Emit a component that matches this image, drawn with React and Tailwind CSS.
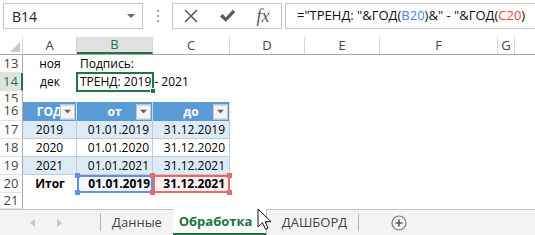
import React from 'react';

const W = { rh: 'w-[23px]', A: 'w-[54px]', B: 'w-[76px]', C: 'w-[77px]', D: 'w-[75px]', E: 'w-[75px]', F: 'w-[118px]', G: 'w-[17px]' };

const FilterBtn = () => (
  <div className="absolute right-[1px] top-1/2 -translate-y-1/2 flex h-[15px] w-[15px] items-center justify-center border border-[#c8c8c8] bg-[#f4f4f4]">
    <svg width="7" height="4" viewBox="0 0 7 4">
      <path d="M0 0h7L3.5 4z" fill="#5f5f5f" />
    </svg>
  </div>
);

const Handle = ({ pos, color }) => (
  <div className={`absolute h-[5px] w-[5px] ${pos} ${color}`} />
);

const RowHead = ({ n, h, active }) => (
  <div
    className={`${W.rh} ${h} shrink-0 flex items-center justify-center overflow-hidden text-[13px] ${
      active ? 'bg-[#e1e1e1] text-[#217346] border-r-2 border-r-[#217346]' : 'bg-white text-[#444] border-r border-r-[#ababab]'
    } border-b border-b-[#e1e1e1]`}
  >
    {n}
  </div>
);

export default function App() {
  const cols = [
    ['A', W.A],
    ['B', W.B],
    ['C', W.C],
    ['D', W.D],
    ['E', W.E],
    ['F', W.F],
    ['G', W.G],
  ];

  const tableRows = [
    { n: 17, y: '2019', from: '01.01.2019', to: '31.12.2019', bg: 'bg-[#ddebf7]' },
    { n: 18, y: '2020', from: '01.01.2020', to: '31.12.2020', bg: 'bg-white' },
    { n: 19, y: '2021', from: '01.01.2021', to: '31.12.2021', bg: 'bg-[#ddebf7]' },
  ];

  return (
    <div className="relative h-[235px] w-[535px] overflow-hidden bg-white font-['Open_Sans',sans-serif] text-[12px] text-black">
      {/* formula bar */}
      <div className="flex h-[37px] items-start pt-[3px]">
        <div className="ml-[3px] flex h-[26px] w-[140px] shrink-0 items-center justify-between border border-[#c6c6c6] pl-[8px] pr-[7px] text-[14px] text-[#222]">
          <span>B14</span>
          <svg width="8" height="4" viewBox="0 0 8 4">
            <path d="M0 0h8L4 4z" fill="#6a6a6a" />
          </svg>
        </div>
        <div className="flex h-[26px] w-[29px] shrink-0 flex-col items-center justify-center gap-[3px]">
          <div className="h-[2px] w-[2px] bg-[#a0a0a0]" />
          <div className="h-[2px] w-[2px] bg-[#a0a0a0]" />
          <div className="h-[2px] w-[2px] bg-[#a0a0a0]" />
        </div>
        <div className="flex h-[26px] w-[110px] shrink-0 items-center border border-[#c6c6c6]">
          <div className="flex w-[36px] justify-center">
            <svg width="16" height="16" viewBox="0 0 16 16">
              <path d="M2 2l12 12M14 2L2 14" stroke="#5a5a5a" strokeWidth="1.6" />
            </svg>
          </div>
          <div className="flex w-[36px] justify-center">
            <svg width="17" height="14" viewBox="0 0 17 14">
              <path d="M1 7.5l2.6-2.4 3.2 3.3L13.8 0.8 16.2 3.2 6.8 12.8z" fill="#5a5a5a" />
            </svg>
          </div>
          <div className="flex w-[36px] justify-center font-['Liberation_Serif',serif] text-[18px] italic leading-none text-[#5a5a5a]">
            fx
          </div>
        </div>
        <div className="ml-[3px] flex h-[26px] flex-1 items-center whitespace-nowrap border-y border-l border-[#c6c6c6] pl-[11px] text-[13px] text-[#111]">
          ="ТРЕНД: "&amp;ГОД(<span className="text-[#4f82d8]">B20</span>)&amp;" - "&amp;ГОД(<span className="text-[#e0474c]">C20</span>)
        </div>
      </div>

      {/* column headers */}
      <div className="flex h-[18px] border-b border-[#ababab]">
        <div className={`${W.rh} relative shrink-0 border-r border-[#d4d4d4]`}>
          <svg className="absolute bottom-[2px] right-[2px]" width="10" height="10" viewBox="0 0 10 10">
            <path d="M10 0v10H0z" fill="#c9c9c9" />
          </svg>
        </div>
        {cols.map(([c, w]) => (
          <div
            key={c}
            className={`${w} shrink-0 flex items-center justify-center text-[13px] border-r border-[#d4d4d4] ${
              c === 'B' ? 'bg-[#e1e1e1] text-[#217346] border-b-2 border-b-[#217346]' : 'text-[#444]'
            }`}
          >
            {c}
          </div>
        ))}
        <div className="flex-1" />
      </div>

      {/* row 13 */}
      <div className="flex h-[18px]">
        <RowHead n={13} h="h-[18px]" />
        <div className={`${W.A} shrink-0 flex items-center justify-center`}>ноя</div>
        <div className={`${W.B} shrink-0 flex items-center pl-[3px] whitespace-nowrap`}>Подпись:</div>
      </div>

      {/* row 14 */}
      <div className="flex h-[18px]">
        <RowHead n={14} h="h-[18px]" active />
        <div className={`${W.A} shrink-0 flex items-center justify-center`}>дек</div>
        <div className={`${W.B} relative shrink-0 flex items-center pl-[3px] whitespace-nowrap`}>
          <span>ТРЕНД: 2019 - 2021</span>
          <div className="absolute -left-[1px] -right-[1px] -top-[1px] -bottom-[1px] border-2 border-[#217346]" />
          <div className="absolute -bottom-[3px] -right-[3px] h-[6px] w-[6px] border border-white bg-[#217346]" />
        </div>
      </div>

      {/* row 15 (mostly hidden) */}
      <div className="flex h-[11px] overflow-hidden">
        <div className={`${W.rh} h-[11px] shrink-0 overflow-hidden border-r border-[#ababab] text-center text-[13px] leading-[15px] text-[#444]`}>
          15
        </div>
      </div>

      {/* row 16: table header */}
      <div className="flex h-[19px]">
        <RowHead n={16} h="h-[19px]" />
        {[
          ['ГОД', W.A],
          ['от', W.B],
          ['до', W.C],
        ].map(([t, w]) => (
          <div
            key={t}
            className={`${w} relative shrink-0 flex items-center justify-center overflow-hidden bg-[#5b9bd5] font-bold text-white border-r border-[#c9d9ee]`}
          >
            {t}
            <FilterBtn />
          </div>
        ))}
      </div>

      {/* rows 17-19 */}
      {tableRows.map((r) => (
        <div key={r.n} className="flex h-[18px]">
          <RowHead n={r.n} h="h-[18px]" />
          <div className={`${W.A} ${r.bg} shrink-0 flex items-center justify-center border-r border-b border-[#c9c9c9]`}>{r.y}</div>
          <div className={`${W.B} ${r.bg} shrink-0 flex items-center justify-end pr-[3px] border-r border-b border-[#c9c9c9]`}>{r.from}</div>
          <div className={`${W.C} ${r.bg} shrink-0 flex items-center justify-end pr-[4px] border-r border-b border-[#c9c9c9]`}>{r.to}</div>
        </div>
      ))}

      {/* row 20: total */}
      <div className="flex h-[18px]">
        <RowHead n={20} h="h-[18px]" />
        <div className={`${W.A} shrink-0 flex items-center justify-center font-bold`}>Итог</div>
        <div className={`${W.B} relative shrink-0 flex items-center justify-end bg-[#f1f5fd] pr-[3px] font-bold`}>
          01.01.2019
          <div className="absolute inset-0 border-2 border-[#6590e0]" />
          <Handle pos="-left-[2px] -top-[2px]" color="bg-[#6590e0]" />
          <Handle pos="-left-[2px] -bottom-[2px]" color="bg-[#6590e0]" />
        </div>
        <div className={`${W.C} relative shrink-0 flex items-center justify-end bg-[#fdf0f0] pr-[5px] font-bold`}>
          31.12.2021
          <div className="absolute inset-0 border-2 border-[#e66a6d]" />
          <Handle pos="-left-[3px] -top-[2px]" color="bg-[#e66a6d]" />
          <Handle pos="-left-[3px] -bottom-[2px]" color="bg-[#e66a6d]" />
          <Handle pos="-right-[2px] -top-[2px]" color="bg-[#e66a6d]" />
          <Handle pos="-right-[2px] -bottom-[2px]" color="bg-[#e66a6d]" />
        </div>
      </div>

      {/* row 21 */}
      <div className="flex h-[16px]">
        <RowHead n={21} h="h-[16px]" />
      </div>

      {/* sheet tabs */}
      <div className="flex h-[26px] bg-[#f3f3f3] text-[13px] text-[#444]">
        <div className="flex w-[173px] shrink-0 items-stretch border-t border-[#c6c6c6]">
          <div className="flex w-[100px] items-center justify-center gap-[22px] pr-[8px]">
            <svg width="5" height="8" viewBox="0 0 5 8">
              <path d="M5 0v8L0 4z" fill="#c6c6c6" />
            </svg>
            <svg width="5" height="8" viewBox="0 0 5 8">
              <path d="M0 0v8l5-4z" fill="#c6c6c6" />
            </svg>
          </div>
          <div className="my-[4px] w-px bg-[#b5b5b5]" />
          <div className="flex flex-1 items-center justify-center">Данные</div>
        </div>
        <div className="flex w-[93px] shrink-0 items-center justify-center border-b-2 border-b-[#217346] bg-white pr-[8px] pt-[1px] font-bold text-[#217346]">
          Обработка
        </div>
        <div className="flex flex-1 items-stretch border-t border-l border-[#b5b5b5] border-t-[#c6c6c6]">
          <div className="flex w-[91px] items-center justify-center pl-[4px]">ДАШБОРД</div>
          <div className="my-[4px] w-px bg-[#b5b5b5]" />
          <div className="flex w-[80px] items-center justify-center">
            <svg width="16" height="16" viewBox="0 0 16 16">
              <circle cx="8" cy="8" r="7" fill="none" stroke="#7a7a7a" strokeWidth="1.2" />
              <path d="M8 4.5v7M4.5 8h7" stroke="#5a5a5a" strokeWidth="1.6" />
            </svg>
          </div>
        </div>
      </div>

      {/* mouse cursor */}
      <svg className="absolute left-[257px] top-[208px]" width="14" height="22" viewBox="0 0 14 22">
        <path d="M1 1v18l4.5-4.3 3 6.5 2.6-1.2-3-6.3H14z" fill="white" stroke="#111" strokeWidth="1" strokeLinejoin="round" />
      </svg>
    </div>
  );
}
